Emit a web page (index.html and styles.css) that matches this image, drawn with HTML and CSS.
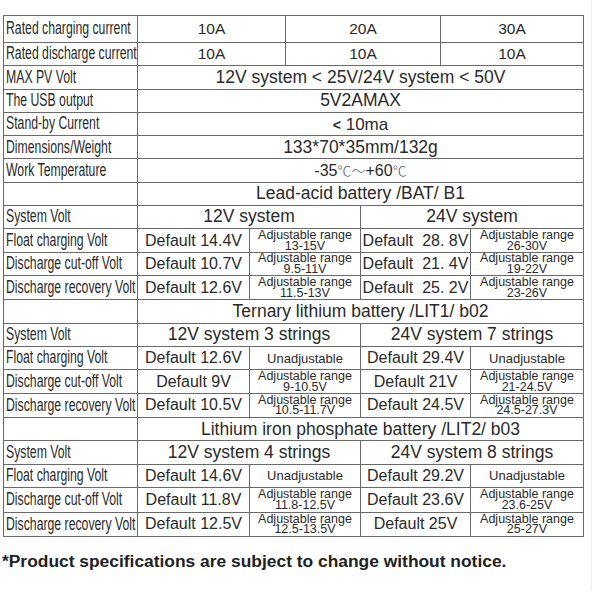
FILE: index.html
```html
<!DOCTYPE html>
<html>
<head>
<meta charset="utf-8">
<link rel="stylesheet" href="styles.css">
</head>
<body>
<div class="page">
<table class="spec">
<colgroup>
<col class="c0"><col class="c1"><col class="c2"><col class="c3"><col class="c4"><col class="c5"><col class="c6">
</colgroup>
<tr class="first"><td class="lab"><span>Rated charging current</span></td><td colspan="2" class="v">10A</td><td colspan="2" class="v">20A</td><td colspan="2" class="v">30A</td></tr>
<tr><td class="lab"><span>Rated discharge current</span></td><td colspan="2" class="v">10A</td><td colspan="2" class="v">10A</td><td colspan="2" class="v">10A</td></tr>
<tr><td class="lab"><span>MAX PV Volt</span></td><td colspan="6" class="w">12V system &lt; 25V/24V system &lt; 50V</td></tr>
<tr><td class="lab"><span>The USB output</span></td><td colspan="6" class="w">5V2AMAX</td></tr>
<tr><td class="lab"><span>Stand-by Current</span></td><td colspan="6" class="w s"><b class="lt">&lt;</b> 10ma</td></tr>
<tr><td class="lab"><span>Dimensions/Weight</span></td><td colspan="6" class="w">133*70*35mm/132g</td></tr>
<tr><td class="lab"><span>Work Temperature</span></td><td colspan="6" class="w t">-35<span class="deg">℃～</span>+60<span class="deg">℃</span></td></tr>

<tr><td class="lab"></td><td colspan="6" class="h">Lead-acid battery /BAT/ B1</td></tr>
<tr><td class="lab"><span>System Volt</span></td><td colspan="3" class="h">12V system</td><td colspan="3" class="h">24V system</td></tr>
<tr><td class="lab"><span>Float charging Volt</span></td><td class="d">Default 14.4V</td><td colspan="2" class="a">Adjustable range<br>13-15V</td><td colspan="2" class="d">Default&nbsp; 28. 8V</td><td class="a">Adjustable range<br>26-30V</td></tr>
<tr><td class="lab"><span>Discharge cut-off Volt</span></td><td class="d">Default 10.7V</td><td colspan="2" class="a">Adjustable range<br>9.5-11V</td><td colspan="2" class="d">Default&nbsp; 21. 4V</td><td class="a">Adjustable range<br>19-22V</td></tr>
<tr class="tall"><td class="lab"><span>Discharge recovery Volt</span></td><td class="d">Default 12.6V</td><td colspan="2" class="a">Adjustable range<br>11.5-13V</td><td colspan="2" class="d">Default&nbsp; 25. 2V</td><td class="a">Adjustable range<br>23-26V</td></tr>

<tr><td class="lab"></td><td colspan="6" class="h">Ternary lithium battery /LIT1/ b02</td></tr>
<tr><td class="lab"><span>System Volt</span></td><td colspan="3" class="h">12V system 3 strings</td><td colspan="3" class="h">24V system 7 strings</td></tr>
<tr><td class="lab"><span>Float charging Volt</span></td><td class="d">Default 12.6V</td><td colspan="2" class="u">Unadjustable</td><td colspan="2" class="d">Default 29.4V</td><td class="u">Unadjustable</td></tr>
<tr><td class="lab"><span>Discharge cut-off Volt</span></td><td class="d">Default 9V</td><td colspan="2" class="a">Adjustable range<br>9-10.5V</td><td colspan="2" class="d">Default 21V</td><td class="a">Adjustable range<br>21-24.5V</td></tr>
<tr class="tall"><td class="lab"><span>Discharge recovery Volt</span></td><td class="d">Default 10.5V</td><td colspan="2" class="a">Adjustable range<br>10.5-11.7V</td><td colspan="2" class="d">Default 24.5V</td><td class="a">Adjustable range<br>24.5-27.3V</td></tr>

<tr><td class="lab"></td><td colspan="6" class="h">Lithium iron phosphate battery /LIT2/ b03</td></tr>
<tr><td class="lab"><span>System Volt</span></td><td colspan="3" class="h">12V system 4 strings</td><td colspan="3" class="h">24V system 8 strings</td></tr>
<tr><td class="lab"><span>Float charging Volt</span></td><td class="d">Default 14.6V</td><td colspan="2" class="u">Unadjustable</td><td colspan="2" class="d">Default 29.2V</td><td class="u">Unadjustable</td></tr>
<tr class="tall"><td class="lab"><span>Discharge cut-off Volt</span></td><td class="d">Default 11.8V</td><td colspan="2" class="a">Adjustable range<br>11.8-12.5V</td><td colspan="2" class="d">Default 23.6V</td><td class="a">Adjustable range<br>23.6-25V</td></tr>
<tr class="tall"><td class="lab"><span>Discharge recovery Volt</span></td><td class="d">Default 12.5V</td><td colspan="2" class="a">Adjustable range<br>12.5-13.5V</td><td colspan="2" class="d">Default 25V</td><td class="a">Adjustable range<br>25-27V</td></tr>
</table>
<p class="note">*Product specifications are subject to change without notice.</p>
</div>
</body>
</html>
```

FILE: styles.css
```css
html, body {
  margin: 0;
  padding: 0;
  background: #fff;
}
.page {
  width: 592px;
  height: 590px;
  border-right: 1px solid #f0f0f0;
  padding-top: 15px;
  box-sizing: border-box;
}
.spec {
  margin-left: 3px;
  border-collapse: collapse;
  table-layout: fixed;
  width: 581px;
  font-family: "Liberation Sans", Arial, sans-serif;
  color: #2a2a2a;
}
.c0 { width: 134px; }
.c1 { width: 112px; }
.c2 { width: 36px; }
.c3 { width: 75px; }
.c4 { width: 80px; }
.c5 { width: 30px; }
.c6 { width: 113px; }
.spec td {
  border: 1px solid #6a6a6a;
  height: 22.3px;
  padding: 0;
  text-align: center;
  vertical-align: middle;
  white-space: nowrap;
  overflow: hidden;
  line-height: 1;
}
.spec tr.first td { height: 26px; }
.spec tr.tall td { height: 23.5px; }
.spec td.lab {
  text-align: left;
  padding-left: 2px;
  font-size: 17.5px;
}
.lab span {
  display: inline-block;
  transform: scaleX(0.70);
  transform-origin: left center;
}
.v { font-size: 15.5px; }
.w { font-size: 17.5px; }
.w.s { font-size: 17px; }
.w.t { font-size: 16px; }
.h { font-size: 17.5px; }
.d { font-size: 16px; }
.u { font-size: 13px; }
.a {
  font-size: 12.5px;
  line-height: 10.5px !important;
}
.lt { font-weight: bold; font-size: 14px; }
.deg { font-family: "Noto Sans CJK SC", sans-serif; font-size: 14px; font-weight: 300; color: #555; }
.note {
  margin: 14px 0 0 2px;
  font-family: "Liberation Sans", Arial, sans-serif;
  font-weight: bold;
  font-size: 17.4px;
  color: #222;
}
```
